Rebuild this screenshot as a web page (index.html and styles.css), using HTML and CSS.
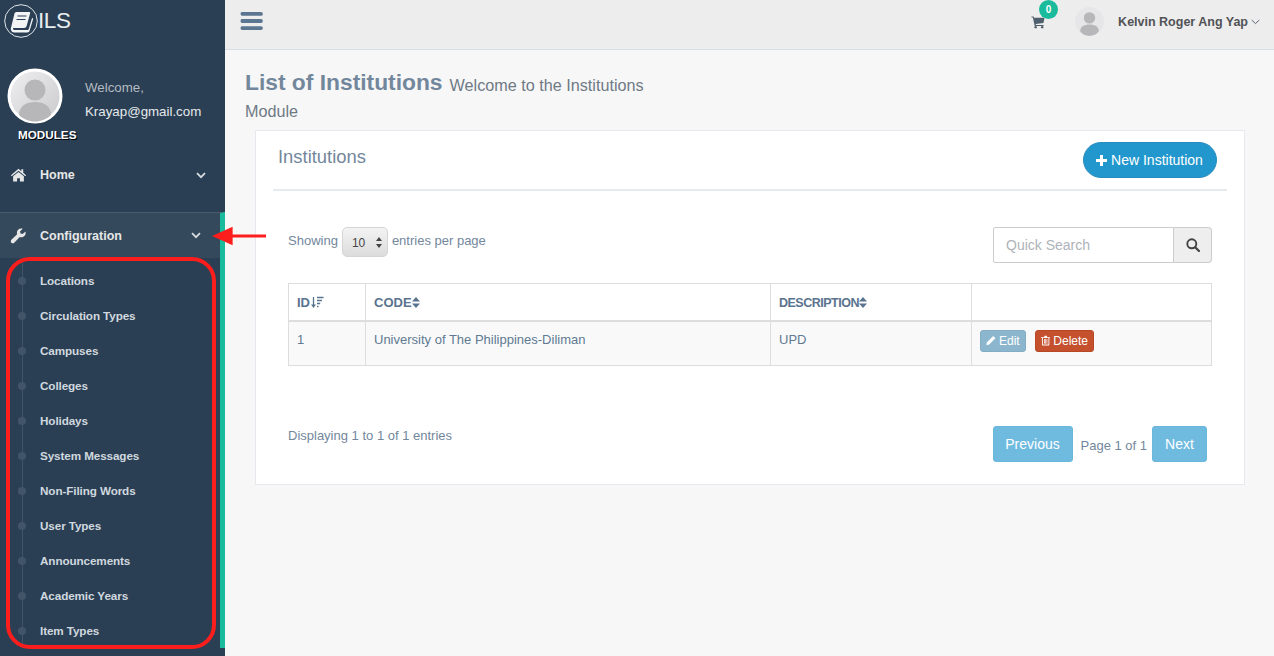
FILE: index.html
```html
<!DOCTYPE html>
<html lang="en">
<head>
<meta charset="utf-8">
<title>List of Institutions</title>
<link rel="stylesheet" href="styles.css">
</head>
<body>
<div class="app">
  <aside class="sidebar">
    <div class="brand">
      <svg class="brand-mark" viewBox="0 0 34 34"><circle cx="17" cy="17" r="16.3" fill="none" stroke="#dfe5ea" stroke-width="1"/><path d="M10.5 9.5c.4-1 1.2-1.5 2.2-1.5h12.4c.9 0 1.300.7 1 1.500l-3.500 12.500c-.4 1.300-1.300 2-2.500 2H9.800c-.7 0-1 .6-.8 1.100.2.600.8.900 1.500.900h12.700c.8 0 1.300-.3 1.600-1.100l3.300-11.100.6.500c.3.300.4.700.3 1.100l-3.400 11.300c-.3 1-1.200 1.700-2.300 1.700H10.300c-2 0-3.500-1.500-3.500-3.400 0-.5.100-.900.200-1.300z" fill="#f2f4f6"/><path d="M13.500 12h9M12.500 15.500h9" stroke="#2a3f54" stroke-width="1.200"/></svg>
      <span class="brand-name">ILS</span>
    </div>
    <div class="profile">
      <svg class="avatar avatar-large" viewBox="0 0 56 56"><defs><linearGradient id="ag" x1="0" y1="0" x2="1" y2="1"><stop offset="0" stop-color="#f0f0f1"/><stop offset="1" stop-color="#c9c9cc"/></linearGradient></defs><circle cx="28" cy="28" r="26" fill="url(#ag)" stroke="#fff" stroke-width="3"/><circle cx="28" cy="22" r="10.500" fill="#b7b7ba"/><path d="M12 47c0-9 7-13 16-13s16 4 16 13c-4 4-10 6.500-16 6.500S16 51 12 47z" fill="#b7b7ba"/></svg>
      <div class="profile-text">
        <div class="welcome">Welcome,</div>
        <div class="email">Krayap@gmail.com</div>
      </div>
    </div>
    <div class="modules-label">MODULES</div>
    <div class="nav-row nav-home">
      <svg class="nav-icon" viewBox="0 0 18 16"><path d="M9 1.500 1 8.200l.9 1.100L9 3.400l7.100 5.900.9-1.100-3-2.500V2h-2v2.100z" fill="#e7e7e7"/><path d="M9 4.700 3.300 9.400v5.600h4.200v-3.600h3v3.600h4.200V9.400z" fill="#e7e7e7"/></svg>
      <span class="nav-label">Home</span>
      <svg class="chev" viewBox="0 0 10 7"><path d="M1 1.200 5 5.200l4-4" fill="none" stroke="#d5dade" stroke-width="1.800"/></svg>
    </div>
    <section class="nav-section">
      <div class="nav-row nav-config">
        <svg class="nav-icon" viewBox="0 0 18 18"><path d="M16.800 3.800 13.700 6.700l-2.400-.6-.6-2.300L13.700.900c-1.800-.6-3.800-.2-5.100 1.100-1.400 1.400-1.700 3.300-1.100 5L1 13.300c-.9.900-.9 2.300 0 3.200s2.300.9 3.200 0l6.200-6.300c1.700.6 3.800.2 5.200-1.200 1.300-1.300 1.800-3.400 1.200-5.200z" fill="#e7e7e7"/></svg>
        <span class="nav-label">Configuration</span>
        <svg class="chev" viewBox="0 0 10 7"><path d="M1 1.200 5 5.200l4-4" fill="none" stroke="#d5dade" stroke-width="1.800"/></svg>
      </div>
      <ul class="subnav">
        <li>Locations</li>
        <li>Circulation Types</li>
        <li>Campuses</li>
        <li>Colleges</li>
        <li>Holidays</li>
        <li>System Messages</li>
        <li>Non-Filing Words</li>
        <li>User Types</li>
        <li>Announcements</li>
        <li>Academic Years</li>
        <li>Item Types</li>
      </ul>
    </section>
  </aside>

  <main class="main">
    <header class="topbar">
      <svg class="burger" viewBox="0 0 23 19"><path d="M0 1.500A1.500 1.500 0 0 1 1.500 0h20a1.500 1.500 0 0 1 0 4h-20A1.500 1.500 0 0 1 0 2.500zM0 9a1.500 1.500 0 0 1 1.500-1.500h20a1.500 1.500 0 0 1 0 4h-20A1.500 1.500 0 0 1 0 10zM0 16.500A1.500 1.500 0 0 1 1.500 15h20a1.500 1.500 0 0 1 0 4h-20A1.500 1.500 0 0 1 0 17.500z" fill="#5a7690"/></svg>
      <div class="topbar-right">
        <div class="cart">
          <svg class="cart-icon" viewBox="0 0 15 14"><path d="M.5 1h2.300l.4 1.500H14.500l-1.200 5.700-8.300.9.300 1.100h8.200v1.200H4L2 2.200H.5z" fill="#4f5f6e"/><circle cx="5" cy="12.500" r="1.300" fill="#4f5f6e"/><circle cx="12" cy="12.500" r="1.300" fill="#4f5f6e"/></svg>
          <span class="badge">0</span>
        </div>
        <svg class="avatar avatar-small" viewBox="0 0 56 56"><circle cx="28" cy="28" r="28" fill="#e6e6e8"/><circle cx="28" cy="21" r="11" fill="#b7b7ba"/><path d="M10 47c0-9 8-13 18-13s18 4 18 13c-4 6-11 9-18 9s-14-3-18-9z" fill="#b7b7ba"/></svg>
        <span class="user-name">Kelvin Roger Ang Yap</span>
        <svg class="user-caret" viewBox="0 0 9 6"><path d="M.7 1 4.500 4.600 8.300 1" fill="none" stroke="#5a6672" stroke-width="1"/></svg>
      </div>
    </header>

    <div class="page">
      <div class="page-heading">
        <div class="heading-line"><h1 class="page-title">List of Institutions</h1><small class="page-sub">Welcome to the Institutions</small></div>
        <small class="page-sub page-sub-wrap">Module</small>
      </div>
      <div class="panel">
        <div class="panel-head">
          <h2 class="panel-title">Institutions</h2>
          <button class="btn-new"><svg class="btn-new-icon" viewBox="0 0 11 11"><path d="M4 0h3v4h4v3H7v4H4V7H0V4h4z" fill="#fff"/></svg>New Institution</button>
        </div>
        <div class="panel-body">
          <div class="controls">
            <div class="entries">
              <span class="entries-text">Showing</span>
              <span class="select"><span>10</span><svg class="select-arrows" viewBox="0 0 6 11"><path d="M3 0 6 4H0zM3 11 0 7h6z" fill="#444"/></svg></span>
              <span class="entries-text">entries per page</span>
            </div>
            <div class="search">
              <div class="search-input">Quick Search</div>
              <div class="search-btn"><svg class="search-icon" viewBox="0 0 14 14"><circle cx="5.800" cy="5.800" r="4.500" fill="none" stroke="#444" stroke-width="1.900"/><path d="m9.200 9.200 3.800 3.800" stroke="#444" stroke-width="2.200" stroke-linecap="round"/></svg></div>
            </div>
          </div>
          <table class="data-table">
            <thead>
              <tr>
                <th class="col-id">ID<svg class="sort-desc" viewBox="0 0 13 13"><path d="M2.500 1v9" stroke="#5a738e" stroke-width="1.300"/><path d="M0 8.500h5L2.500 12z" fill="#5a738e"/><path d="M6 1.500h6.500M6 4.500h5M6 7.500h3.200M6 10.500h1.500" stroke="#5a738e" stroke-width="1.500"/></svg></th>
                <th class="col-code">CODE<svg class="sort" viewBox="0 0 8 11"><path d="M4 0 8 4.500H0zM4 11 0 6.500h8z" fill="#5a738e"/></svg></th>
                <th class="col-desc">DESCRIPTION<svg class="sort" viewBox="0 0 8 11"><path d="M4 0 8 4.500H0zM4 11 0 6.500h8z" fill="#5a738e"/></svg></th>
                <th></th>
              </tr>
            </thead>
            <tbody>
              <tr>
                <td>1</td>
                <td>University of The Philippines-Diliman</td>
                <td>UPD</td>
                <td>
                  <div class="actions">
                    <button class="btn-sm btn-edit"><svg class="btn-icon" viewBox="0 0 11 11"><path d="M8 .6 10.400 3 3.500 9.900.4 10.600 1.100 7.500z" fill="#fff"/></svg>Edit</button>
                    <button class="btn-sm btn-delete"><svg class="btn-icon" viewBox="0 0 10 11"><path d="M3.300 1.900 3.900.5h2.200l.6 1.400H10v1H9v7c0 .6-.4 1.100-1 1.100H2c-.6 0-1-.5-1-1.100v-7H0v-1zM2 2.900v7h6v-7zM3.200 4h.8v5h-.8zm1.400 0h.8v5h-.8zM6 4h.8v5H6z" fill="#fff"/></svg>Delete</button>
                  </div>
                </td>
              </tr>
            </tbody>
          </table>
          <div class="table-foot">
            <div class="display-info">Displaying 1 to 1 of 1 entries</div>
            <div class="pager">
              <button class="btn-page btn-prev">Previous</button>
              <span class="page-info">Page 1 of 1</span>
              <button class="btn-page btn-next">Next</button>
            </div>
          </div>
        </div>
      </div>
    </div>
  </main>

  <div class="callout-box"></div>
  <svg class="callout-arrow" viewBox="0 0 56 22"><path d="M0 11 21 1.500V9.500H55V12.500H21V20.500z" fill="#fb1e1c"/></svg>
</div>
</body>
</html>
```
FILE: styles.css
```css
* { box-sizing: border-box; }
html, body { margin: 0; height: 100%; }
body {
  font-family: "Liberation Sans", Arial, sans-serif;
  font-size: 13px;
  color: #73879c;
  background: #f7f7f7;
  overflow: hidden;
}
.app { position: relative; display: flex; height: 656px; width: 1274px; }

/* Sidebar */
.sidebar { width: 225px; flex: none; background: #2a3f54; color: #ecf0f1; height: 656px; overflow: hidden; }
.brand { display: flex; align-items: center; height: 38px; padding: 4px 0 0 4px; }
.brand-mark { width: 34px; height: 34px; display: block; }
.brand-name { font-size: 22.5px; line-height: 34px; color: #e8edf0; letter-spacing: -.4px; }
.profile { display: flex; padding: 30px 0 0 7px; height: 89px; }
.avatar { display: block; }
.avatar-large { width: 56px; height: 56px; flex: none; }
.profile-text { margin-left: 22px; padding-top: 8px; font-size: 13.3px; }
.welcome { color: #b4bbc1; line-height: 24px; }
.email { color: #e6eaec; line-height: 24px; }
.modules-label { padding: 1px 0 0 18px; font-size: 11.7px; line-height: 14px; font-weight: bold; color: #fff; text-shadow: 1px 1px 0 #000; height: 15px; }
.nav-row { display: flex; align-items: center; font-size: 12.5px; font-weight: bold; color: #e7e7e7; }
.nav-home { height: 46px; margin-top: 10px; padding: 0 19px 0 10px; margin-bottom: 14px; }
.nav-icon { width: 17px; height: 16px; flex: none; }
.nav-label { margin-left: 13px; flex: 1; }
.chev { width: 10px; height: 7px; flex: none; }
.nav-section { border-top: 1px solid #4a5b6b; border-right: 5px solid #1abb9c; height: 436px; }
.nav-config { height: 45px; margin-bottom: 5px; padding: 0 19px 0 10px; background: #34495b; }
.subnav { list-style: none; margin: 0; padding: 0; background: #2a3f54; }
.subnav li {
  position: relative;
  height: 35px;
  line-height: 36px;
  padding-left: 40px;
  font-size: 11.7px;
  font-weight: bold;
  color: #d0d8df;
  letter-spacing: -.1px;
}
.subnav li::before { content: ""; position: absolute; left: 22px; top: 0; bottom: 0; width: 1px; background: #425568; }
.subnav li::after { content: ""; position: absolute; left: 18px; top: 14px; width: 8px; height: 8px; border-radius: 50%; background: #425568; }

/* Main */
.main { flex: 1; min-width: 0; }
.topbar { display: flex; align-items: center; justify-content: space-between; height: 50px; background: #ededed; border-bottom: 1px solid #d9dee4; padding: 0 14px 0 15px; }
.burger { width: 23px; height: 18px; display: block; margin-bottom: 7px; }
.topbar-right { display: flex; align-items: center; margin-bottom: 6px; }
.cart { position: relative; width: 14px; height: 14px; margin-right: 30px; margin-top: 1px; }
.cart-icon { width: 14px; height: 14px; display: block; }
.badge { position: absolute; left: 8px; top: -15px; width: 19px; height: 19px; border-radius: 50%; background: #1abb9c; color: #fff; font-size: 10px; font-weight: bold; line-height: 19px; text-align: center; }
.avatar-small { width: 29px; height: 29px; margin-right: 14px; }
.user-name { font-size: 12.5px; font-weight: bold; color: #515356; }
.user-caret { width: 9px; height: 6px; margin-left: 3px; }

.page { padding: 0 29px 0 20px; }
.page-heading { width: 430px; height: 80px; padding-top: 22px; }
.heading-line { display: flex; align-items: flex-start; height: 26px; }
.page-title { margin: -3px 7px 0 0; font-size: 22.8px; line-height: 26px; font-weight: bold; color: #73879c; }
.page-sub { font-size: 16.2px; font-weight: normal; color: #6f7a85; line-height: 26px; }
.page-sub-wrap { display: block; }
.panel { margin-left: 10px; height: 355px; background: #fff; border: 1px solid #e6e9ed; padding: 0 17px; }
.panel-head { display: flex; justify-content: space-between; height: 60px; padding: 11px 10px 0 5px; border-bottom: 2px solid #e6e9ed; }
.panel-title { margin: 0; font-size: 18.4px; font-weight: normal; line-height: 30px; color: #73879c; }
.btn-new { display: flex; align-items: center; justify-content: center; width: 134px; height: 36px; border: 1px solid #2a8cbd; border-radius: 18px; background: #2297cd; color: #fff; font: 14px "Liberation Sans", Arial, sans-serif; padding: 0 1px 0 0; }
.btn-new-icon { width: 11px; height: 11px; margin-right: 4px; }
.panel-body { padding: 0 15px; }
.controls { display: flex; justify-content: space-between; align-items: flex-start; padding-top: 36px; height: 92px; }
.entries { display: flex; align-items: center; gap: 4px; height: 30px; }
.entries-text { margin-top: -4px; }
.select { display: flex; align-items: center; justify-content: space-between; width: 46px; height: 30px; padding: 1px 5px 0 9px; border: 1px solid #d5d5d5; border-radius: 5px; background: linear-gradient(#f3f3f3, #dcdcdc); color: #444; font-size: 12px; }
.select-arrows { width: 6px; height: 11px; }
.search { display: flex; height: 36px; width: 219px; }
.search-input { flex: 1; border: 1px solid #ccc; border-radius: 2px 0 0 2px; padding: 0 12px; line-height: 34px; font-size: 14px; color: #aeb3b8; background: #fff; }
.search-btn { display: flex; align-items: center; justify-content: center; width: 38px; border: 1px solid #ccc; border-left: 0; border-radius: 0 4px 4px 0; background: #eee; }
.search-icon { width: 14px; height: 14px; }

.data-table { width: 924px; border-collapse: collapse; table-layout: fixed; }
.data-table th, .data-table td { border: 1px solid #ddd; padding: 0 8px; text-align: left; }
.data-table th { height: 37px; padding-top: 1px; font-size: 13px; font-weight: bold; color: #5a738e; border-bottom: 2px solid #ddd; }
.data-table td { height: 45px; color: #5f7a92; background: #f9f9f9; vertical-align: top; padding-top: 10px; line-height: 15px; }
.col-id { width: 77px; }
.col-code { width: 405px; }
.data-table .col-desc { width: 201px; padding-top: 2px; letter-spacing: -.5px; font-size: 12.5px; }
.sort-desc { width: 13px; height: 13px; margin-left: 1px; vertical-align: -2px; }
.sort { width: 8px; height: 11px; margin-left: 0; vertical-align: -1px; }
.actions { display: flex; gap: 9px; margin-top: -2px; }
.btn-sm { display: flex; align-items: center; height: 22px; padding: 0 5px; border-radius: 3px; color: #fff; font: 12px "Liberation Sans", Arial, sans-serif; }
.btn-icon { width: 10px; height: 11px; margin-right: 3px; }
.btn-edit { width: 46px; background: #8bb6cd; border: 1px solid #82adc4; }
.btn-delete { width: 59px; background: #c5502e; border: 1px solid #b84726; }
.table-foot { display: flex; justify-content: space-between; align-items: flex-start; padding: 60px 5px 0 0; }
.display-info { margin-top: 2px; }
.pager { display: flex; align-items: center; }
.page-info { margin: 2px 5px 0 8px; }
.btn-page { height: 36px; border: 1px solid #69b7db; border-radius: 3px; background: #6fbadf; color: #fff; font: 14px "Liberation Sans", Arial, sans-serif; padding: 0; }
.btn-prev { width: 80px; }
.btn-next { width: 55px; }

/* Annotation overlays */
.callout-box { position: absolute; left: 6px; top: 257px; width: 210px; height: 392px; border: 4px solid #fb1e1c; border-radius: 24px; }
.callout-arrow { position: absolute; left: 212px; top: 225px; width: 55px; height: 22px; }
```
